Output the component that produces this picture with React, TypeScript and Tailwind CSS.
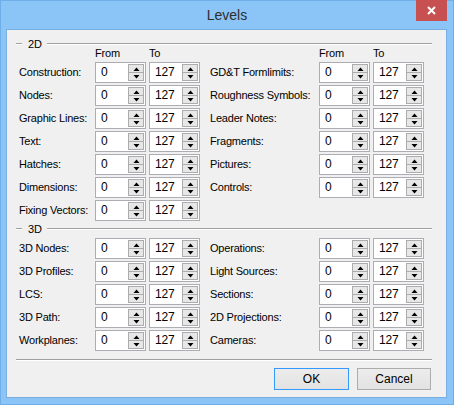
const left2D = ["Construction:", "Nodes:", "Graphic Lines:", "Text:", "Hatches:", "Dimensions:", "Fixing Vectors:"];
const right2D = ["GD&T Formlimits:", "Roughness Symbols:", "Leader Notes:", "Fragments:", "Pictures:", "Controls:"];
const left3D = ["3D Nodes:", "3D Profiles:", "LCS:", "3D Path:", "Workplanes:"];
const right3D = ["Operations:", "Light Sources:", "Sections:", "2D Projections:", "Cameras:"];

function Arrow({ up }: { up?: boolean }) {
  return (
    <svg width="7" height="4" viewBox="0 0 7 4" className="block">
      <polygon points={up ? "0.5,4 3.5,0.5 6.5,4" : "0.5,0 3.5,3.5 6.5,0"} fill="#000" />
    </svg>
  );
}

function Spin({ value }: { value: string }) {
  return (
    <div className="flex h-[21px] w-[51px] border border-[#ABADB3] bg-white">
      <div className="flex-1 pl-[5px] text-[12px] leading-[19px] text-black">{value}</div>
      <div className="flex w-[17px] flex-col py-[1px] pr-[1px]">
        <div className="flex flex-1 items-center justify-center border border-[#ACACAC] bg-[#E7E7E7]">
          <Arrow up />
        </div>
        <div className="flex flex-1 items-center justify-center border border-t-0 border-[#ACACAC] bg-[#E7E7E7]">
          <Arrow />
        </div>
      </div>
    </div>
  );
}

function Row({ label, labelW }: { label: string; labelW: string }) {
  return (
    <div className="flex h-[21px] items-center">
      <div className={`${labelW} whitespace-nowrap`}>{label}</div>
      <Spin value="0" />
      <div className="ml-[3px]">
        <Spin value="127" />
      </div>
    </div>
  );
}

function Heading({ title }: { title: string }) {
  return (
    <div className="flex h-[6px] items-center">
      <div className="ml-[9px] h-[2px] w-[6px] border-t border-b border-t-[#A0A0A0] border-b-white" />
      <span className="ml-[6px] leading-[14px]">{title}</span>
      <div className="ml-[5px] mr-[14px] h-[2px] flex-1 border-t border-b border-t-[#A0A0A0] border-b-white" />
    </div>
  );
}

function Column({ labels, labelW, header }: { labels: string[]; labelW: string; header?: boolean }) {
  return (
    <div className="flex flex-col">
      {header && (
        <div className="flex h-[14px] items-center leading-[14px]">
          <div className={labelW} />
          <div className="w-[54px]">From</div>
          <div>To</div>
        </div>
      )}
      <div className={`flex flex-col gap-[2px] ${header ? "mt-[2px]" : ""}`}>
        {labels.map((l) => (
          <Row key={l} label={l} labelW={labelW} />
        ))}
      </div>
    </div>
  );
}

export default function App() {
  return (
    <div className="relative flex h-[405px] w-[454px] flex-col border border-[#6FAEE6] bg-[#8BC4F6] text-[11px] tracking-[-0.2px] text-black font-['Liberation_Sans',Arial,sans-serif]">
      {/* Title bar */}
      <div className="flex h-[29px] items-center justify-center pb-[1px]">
        <span className="text-[14px] tracking-normal text-[#2E2E2E]">Levels</span>
      </div>
      <div className="absolute right-[6px] top-[-1px] flex h-[21px] w-[31px] items-center justify-center bg-[#C75050]">
        <svg width="9" height="9" viewBox="0 0 9 9">
          <path d="M1 1L8 8M8 1L1 8" stroke="#fff" strokeWidth="2" />
        </svg>
      </div>

      {/* Client area */}
      <div className="ml-[6px] flex h-[367px] w-[439px] flex-col bg-[#F0F0F0] shadow-[0_0_0_1px_#79AEE0]">
        <div className="mt-[11px]">
          <Heading title="2D" />
        </div>
        <div className="mt-[-1px] flex">
          <div className="ml-[12px]">
            <Column labels={left2D} labelW="w-[76px]" header />
          </div>
          <div className="ml-[10px]">
            <Column labels={right2D} labelW="w-[109px]" header />
          </div>
        </div>

        <div className="mt-[5px]">
          <Heading title="3D" />
        </div>
        <div className="mt-[6px] flex">
          <div className="ml-[12px]">
            <Column labels={left3D} labelW="w-[76px]" />
          </div>
          <div className="ml-[10px]">
            <Column labels={right3D} labelW="w-[109px]" />
          </div>
        </div>

        <div className="ml-[9px] mr-[14px] mt-[8px] h-[2px] border-t border-b border-t-[#A0A0A0] border-b-white" />

        <div className="mt-[7px] flex justify-end gap-[8px] pr-[15px]">
          <button className="h-[22px] w-[75px] border border-[#3399FF] bg-gradient-to-b from-[#ECECEC] to-[#E2E2E2] text-[12px] tracking-normal">
            OK
          </button>
          <button className="h-[22px] w-[74px] border border-[#ACACAC] bg-gradient-to-b from-[#ECECEC] to-[#E2E2E2] text-[12px] tracking-normal">
            Cancel
          </button>
        </div>
      </div>
    </div>
  );
}
